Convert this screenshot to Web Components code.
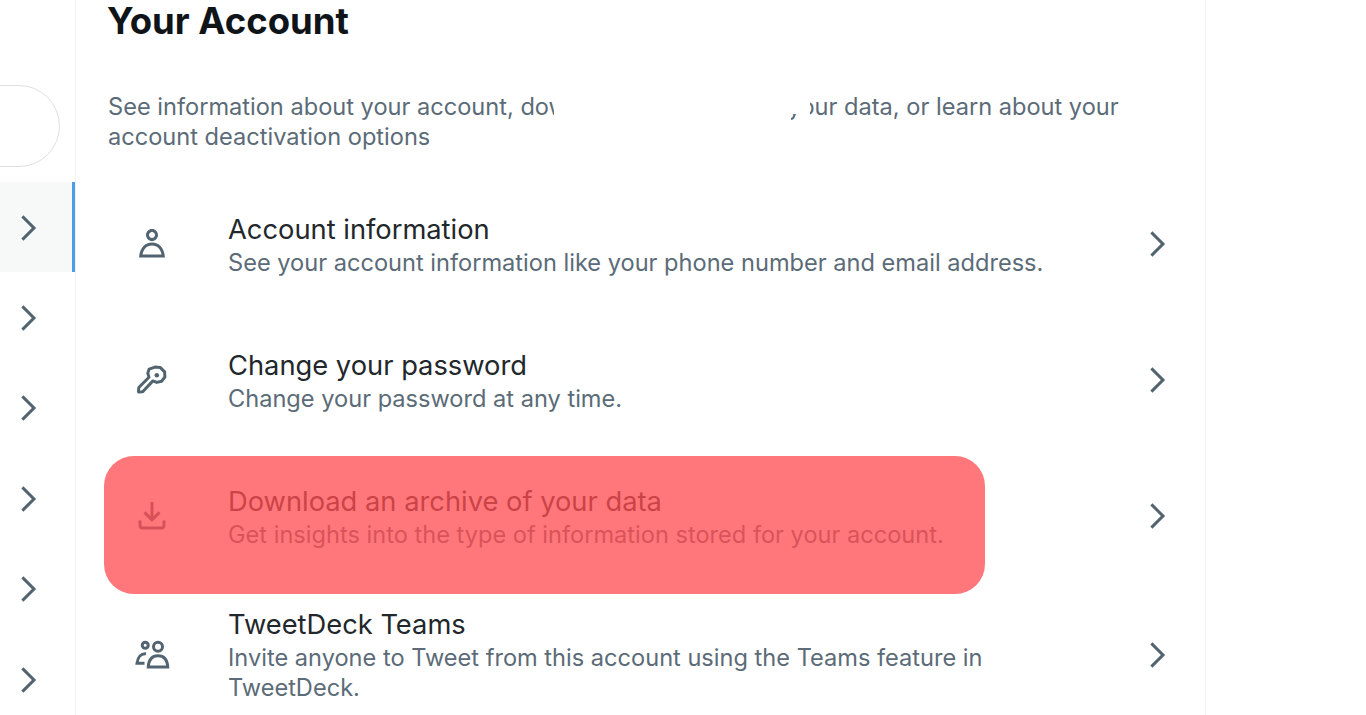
<!DOCTYPE html>
<html lang="en">
<head>
<meta charset="utf-8">
<title>Your Account</title>
<style>
  html, body { margin: 0; height: 715px; overflow: hidden; background: #fff; }
  body { font-family: Inter, "Liberation Sans", sans-serif; color: #0f1419; }
</style>
</head>
<body>
<account-page>
  <settings-nav slot="nav"></settings-nav>
  <h-title slot="main">Your Account</h-title>
  <intro-text slot="main">See information about your account, download an archive of your data, or learn about your account deactivation options</intro-text>
  <setting-row slot="main" heading="Account information" sub="See your account information like your phone number and email address." icon="person"></setting-row>
  <setting-row slot="main" heading="Change your password" sub="Change your password at any time." icon="key"></setting-row>
  <setting-row slot="main" heading="Download an archive of your data" sub="Get insights into the type of information stored for your account." icon="download"></setting-row>
  <setting-row slot="main" tall heading="TweetDeck Teams" sub="Invite anyone to Tweet from this account using the Teams feature in TweetDeck." icon="teams"></setting-row>
  <red-mark slot="main"></red-mark>
</account-page>

<script>
const ICONS = {
  chevron: '<path fill="currentColor" d="M14.586 12L7.543 4.96l1.414-1.42L17.414 12l-8.457 8.46-1.414-1.42L14.586 12z"/>',
  person: '<path fill="currentColor" d="M5.651 19h12.698c-.337-1.8-1.023-3.21-1.945-4.19C15.318 13.65 13.838 13 12 13s-3.317.65-4.404 1.81c-.922.98-1.608 2.39-1.945 4.19zm.486-5.56C7.627 11.85 9.648 11 12 11s4.373.85 5.863 2.44c1.477 1.58 2.366 3.8 2.632 6.46l.11 1.1H3.395l.11-1.1c.266-2.66 1.155-4.88 2.632-6.46zM12 4c-1.105 0-2 .9-2 2s.895 2 2 2 2-.9 2-2-.895-2-2-2zM8 6c0-2.21 1.791-4 4-4s4 1.79 4 4-1.791 4-4 4-4-1.79-4-4z"/>',
  key: '<path fill="none" stroke="currentColor" stroke-width="2" stroke-linejoin="round" d="M14 3.400l3.400.2 3 3 .2 3.400-2.200 2.800-3.200.8-2.600-1-6.800 7.200-2.800.2.2-3 6.800-6.800-.8-2.800.9-2.700z"/><circle cx="15.200" cy="8.800" r="1.500" fill="currentColor"/>',
  download: '<path fill="currentColor" d="M11.99 16l-5.7-5.7L7.7 8.88l3.29 3.3V2.59h2v9.59l3.3-3.3 1.41 1.42-5.71 5.7zM21 15l-.02 3.51c0 1.38-1.12 2.49-2.5 2.49H5.5C4.11 21 3 19.88 3 18.5V15h2v3.5c0 .28.22.5.5.5h12.98c.28 0 .5-.22.5-.5L19 15h2z"/>',
  teams: '<g fill="none" stroke="currentColor" stroke-width="2"><circle cx="7.500" cy="5.500" r="2"/><circle cx="16" cy="6.500" r="3"/><path d="M9.500 20c.3-5 2.800-7.500 6.500-7.500s6.200 2.500 6.500 7.500z"/><path d="M8 11.200c-3.200-.3-5.500 2-6 6.300h5"/></g>'
};

class AccountPage extends HTMLElement {
  constructor() {
    super();
    this.attachShadow({ mode: 'open' });
    this.shadowRoot.innerHTML = `
      <style>
        :host { display: flex; width: 1366px; height: 715px; overflow: hidden; }
        .nav { width: 75px; flex: none; border-right: 1px solid #eff3f4; }
        .main {
          position: relative;
          width: 1130px;
          box-sizing: border-box;
          flex: none;
          padding: 0 30px 0 32px;
          border-right: 1px solid #eff3f4;
        }
      </style>
      <div class="nav"><slot name="nav"></slot></div>
      <div class="main"><slot name="main"></slot></div>
    `;
  }
}

class SettingsNav extends HTMLElement {
  constructor() {
    super();
    this.attachShadow({ mode: 'open' });
    let rows = '';
    for (let i = 0; i < 6; i++) {
      rows += `<div class="row ${i === 0 ? 'active' : ''}"><svg viewBox="0 0 24 24">${ICONS.chevron}</svg></div>`;
    }
    this.shadowRoot.innerHTML = `
      <style>
        :host { display: block; padding-top: 85px; }
        .search {
          width: 120px;
          height: 82px;
          box-sizing: border-box;
          margin: 0 0 15px -60px;
          border: 1px solid #dcdfe1;
          border-radius: 41px;
        }
        .row {
          height: 90.4px;
          box-sizing: border-box;
          display: flex;
          align-items: center;
          padding: 1px 0 0 10px;
          color: #536471;
        }
        .row.active { background: #f7f9f9; border-right: 3px solid #4a9de6; }
        svg { width: 36px; height: 36px; display: block; }
      </style>
      <div class="search"></div>
      ${rows}
    `;
  }
}

class HTitle extends HTMLElement {
  constructor() {
    super();
    this.attachShadow({ mode: 'open' });
    this.shadowRoot.innerHTML = `
      <style>
        :host { display: block; height: 92px; }
        h1 { margin: 0 0 0 -1px; font-size: 36.5px; line-height: 42px; font-weight: 700; color: #0f1419; }
      </style>
      <h1><slot></slot></h1>
    `;
  }
}

class IntroText extends HTMLElement {
  constructor() {
    super();
    this.attachShadow({ mode: 'open' });
    this.shadowRoot.innerHTML = `
      <style>
        :host { display: block; position: relative; height: 84px; font-size: 23.6px; line-height: 30px; color: #5b6b78; }
        /* white block that hides part of the sentence in the source image */
        .blank {
          position: absolute;
          left: 446px;
          top: -4px;
          width: 256px;
          height: 34px;
          background: #fff;
          clip-path: polygon(0 0, 100% 0, 100% 100%, 243px 100%, 243px 26px, 237px 26px, 237px 100%, 0 100%);
        }
      </style>
      <slot></slot>
      <div class="blank"></div>
    `;
  }
}

class SettingRow extends HTMLElement {
  constructor() {
    super();
    this.attachShadow({ mode: 'open' });
    this.shadowRoot.innerHTML = `
      <style>
        :host { display: flex; align-items: center; height: 136px; }
        :host([tall]) { height: 142px; }
        .icon { width: 88px; margin-right: 32px; flex: none; display: flex; justify-content: center; color: #536471; }
        .text { flex: 1; max-width: 860px; padding-top: 2px; }
        :host([tall]) .text { padding: 0; }
        .heading { font-size: 27.3px; line-height: 36px; color: #22272b; }
        .sub { font-size: 23.6px; line-height: 30px; color: #5b6b78; }
        .more { margin-left: auto; flex: none; color: #536471; }
        svg { width: 36px; height: 36px; display: block; }
      </style>
      <div class="icon"><svg viewBox="0 0 24 24"></svg></div>
      <div class="text">
        <div class="heading"></div>
        <div class="sub"></div>
      </div>
      <div class="more"><svg viewBox="0 0 24 24">${ICONS.chevron}</svg></div>
    `;
  }

  connectedCallback() {
    this.shadowRoot.querySelector('.heading').textContent = this.getAttribute('heading');
    this.shadowRoot.querySelector('.sub').textContent = this.getAttribute('sub');
    this.shadowRoot.querySelector('.icon svg').innerHTML = ICONS[this.getAttribute('icon')];
  }
}

class RedMark extends HTMLElement {
  constructor() {
    super();
    this.attachShadow({ mode: 'open' });
    this.shadowRoot.innerHTML = `
      <style>
        :host {
          position: absolute;
          left: 28px;
          top: 456px;
          width: 881px;
          height: 138px;
          border-radius: 30px;
          background: rgba(255, 76, 80, .76);
        }
      </style>
    `;
  }
}

customElements.define('account-page', AccountPage);
customElements.define('settings-nav', SettingsNav);
customElements.define('h-title', HTitle);
customElements.define('intro-text', IntroText);
customElements.define('setting-row', SettingRow);
customElements.define('red-mark', RedMark);
</script>
</body>
</html>
